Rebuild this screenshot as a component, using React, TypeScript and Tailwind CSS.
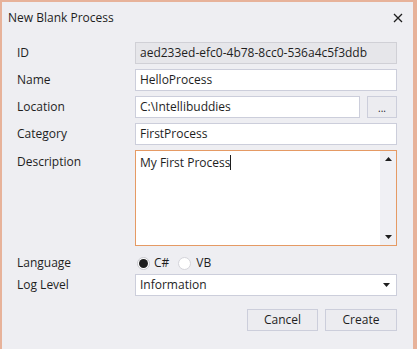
import React from "react";

const font = { fontFamily: '"Open Sans", "Noto Sans", sans-serif' };

function Label({ children, top }: { children: React.ReactNode; top?: boolean }) {
  return (
    <div className={`w-[118px] shrink-0 text-[12px] text-[#1e1e1e] ${top ? "pt-[3px]" : "flex items-center"}`}>
      {children}
    </div>
  );
}

function Field({ value, disabled }: { value: string; disabled?: boolean }) {
  return (
    <div
      className={`flex-1 h-[22px] flex items-center pl-[4px] border text-[12px] text-[#1e1e1e] ${
        disabled ? "bg-[#e6e6ea] border-[#d0d0d6]" : "bg-white border-[#cccedb]"
      }`}
    >
      {value}
    </div>
  );
}

export default function App() {
  return (
    <div className="w-[417px] h-[349px] bg-[#e7b29a] pt-[2px] pl-[2px] pr-[4px] flex" style={font}>
      <div className="flex-1 bg-[#eeeef2] flex flex-col">
        <div className="h-[32px] flex items-center justify-between pl-[6px] pr-[10px]">
          <span className="text-[12px] text-[#1e1e1e]">New Blank Process</span>
          <svg width="10" height="10" viewBox="0 0 10 10">
            <path d="M1 1L9 9M9 1L1 9" stroke="#1e1e1e" strokeWidth="1.3" />
          </svg>
        </div>
        <div className="flex flex-col pl-[15px] pr-[16px] mt-[8px]">
          <div className="flex h-[22px]">
            <Label>ID</Label>
            <Field value="aed233ed-efc0-4b78-8cc0-536a4c5f3ddb" disabled />
          </div>
          <div className="flex h-[22px] mt-[5px]">
            <Label>Name</Label>
            <Field value="HelloProcess" />
          </div>
          <div className="flex h-[22px] mt-[5px]">
            <Label>Location</Label>
            <Field value="C:\Intellibuddies" />
            <div className="ml-[7px] w-[30px] h-[22px] bg-[#ececf0] border border-[#cccedb] flex items-center justify-center text-[10px] text-[#1e1e1e] leading-none pt-[2px]">
              ...
            </div>
          </div>
          <div className="flex h-[22px] mt-[5px]">
            <Label>Category</Label>
            <Field value="FirstProcess" />
          </div>
          <div className="flex h-[96px] mt-[5px]">
            <Label top>Description</Label>
            <div className="flex-1 flex border border-[#e59a64] bg-white">
              <div className="flex-1 pl-[4px] pt-[3px] text-[12px] text-[#1e1e1e] flex items-start">
                <span>My First Process</span>
                <span className="inline-block w-px h-[15px] bg-[#1e1e1e] mt-[1px]" />
              </div>
              <div className="w-[16px] bg-[#f0f0f4] flex flex-col items-center justify-between py-[6px]">
                <svg width="7" height="4" viewBox="0 0 7 4">
                  <path d="M0 4L3.5 0L7 4Z" fill="#1e1e1e" />
                </svg>
                <svg width="7" height="4" viewBox="0 0 7 4">
                  <path d="M0 0L3.5 4L7 0Z" fill="#1e1e1e" />
                </svg>
              </div>
            </div>
          </div>
          <div className="flex h-[18px] mt-[8px]">
            <Label>Language</Label>
            <div className="flex items-center pl-[2px] text-[12px] text-[#1e1e1e]">
              <div className="w-[13px] h-[13px] rounded-full bg-white border border-[#c8c8ce] flex items-center justify-center">
                <div className="w-[9px] h-[9px] rounded-full bg-[#1e1e1e]" />
              </div>
              <span className="ml-[4px]">C#</span>
              <div className="ml-[9px] w-[13px] h-[13px] rounded-full bg-white border border-[#d4d4da]" />
              <span className="ml-[5px]">VB</span>
            </div>
          </div>
          <div className="flex h-[22px] mt-[2px]">
            <Label>Log Level</Label>
            <div className="flex-1 h-[22px] flex items-center justify-between pl-[4px] pr-[6px] border border-[#cccedb] bg-white text-[12px] text-[#1e1e1e]">
              <span>Information</span>
              <svg width="7" height="4" viewBox="0 0 7 4">
                <path d="M0 0L3.5 4L7 0Z" fill="#1e1e1e" />
              </svg>
            </div>
          </div>
          <div className="flex justify-end mt-[13px] gap-[7px]">
            <div className="w-[71px] h-[22px] bg-[#ececf0] border border-[#cccedb] flex items-center justify-center text-[12px] text-[#1e1e1e]">
              Cancel
            </div>
            <div className="w-[72px] h-[22px] bg-[#ececf0] border border-[#cccedb] flex items-center justify-center text-[12px] text-[#1e1e1e]">
              Create
            </div>
          </div>
        </div>
      </div>
    </div>
  );
}
